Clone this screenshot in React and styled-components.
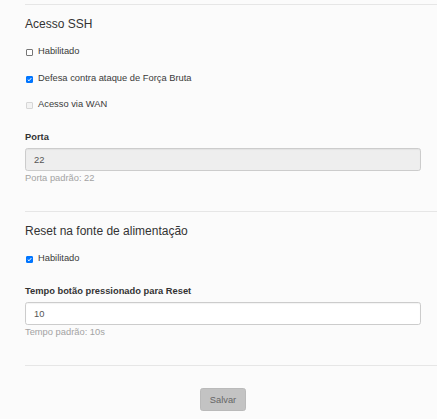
import React from "react";
import styled, { createGlobalStyle } from "styled-components";

const GlobalStyle = createGlobalStyle`
    html, body {
        margin: 0;
        padding: 0;
        background: #fbfbfb;
    }
    body {
        font-family: "Liberation Sans", Arial, sans-serif;
        color: #333;
    }
`;

const Page = styled.div`
    padding-top: 4px;
    padding-left: 25px;
`;

const Divider = styled.hr`
    margin: 0;
    border: none;
    border-top: 1px solid #e6e6e6;
    height: 0;
`;

const Section = styled.section`
    padding-right: 16px;
    padding-bottom: 26px;
`;

const Title = styled.h4`
    margin: 12px 0 0;
    font-size: 12px;
    line-height: 14px;
    font-weight: normal;
    color: #333;
`;

const CheckList = styled.div`
    display: flex;
    flex-direction: column;
    gap: 13.5px;
    margin-top: 14px;
`;

const CheckRow = styled.label`
    display: flex;
    align-items: center;
    height: 13px;
    font-size: 9.33px;
    line-height: 13px;
    color: #3a3a3a;
`;

const Box = styled.span`
    box-sizing: border-box;
    width: 7px;
    height: 7px;
    margin: 2px 5px 0 1px;
    border-radius: 1px;
    display: flex;
    align-items: center;
    justify-content: center;
    border: 1px solid ${(props) => (props.checked ? "#0075ff" : props.disabled ? "#d6d6d6" : "#767676")};
    background: ${(props) => (props.checked ? "#0075ff" : props.disabled ? "#f3f3f3" : "#fff")};
`;

const Label = styled.div`
    margin-top: 20px;
    font-size: 9.33px;
    line-height: 13px;
    font-weight: bold;
    color: #333;
`;

const Input = styled.input`
    display: block;
    box-sizing: border-box;
    width: 100%;
    height: 23px;
    margin-top: 4px;
    padding: 0 8px;
    font-family: inherit;
    font-size: 9.33px;
    color: #555;
    border: 1px solid #cccccc;
    border-radius: 2.67px;
    background: ${(props) => (props.disabled ? "#eeeeee" : "#fff")};
    box-shadow: inset 0 1px 1px rgba(0, 0, 0, 0.05);
    outline: none;
`;

const Help = styled.div`
    margin-top: 1px;
    font-size: 9.33px;
    line-height: 13px;
    color: #a3a3a3;
`;

const Footer = styled.div`
    display: flex;
    justify-content: center;
    padding: 22px 16px 0 0;
`;

const Button = styled.button`
    height: 23px;
    padding: 0 9px;
    font-family: inherit;
    font-size: 9.33px;
    color: #666;
    background: #c3c3c3;
    border: 1px solid #bababa;
    border-radius: 2.67px;
    cursor: not-allowed;
`;

function Check({ checked, disabled, children }) {
    return (
        <CheckRow>
            <Box checked={checked} disabled={disabled}>
                {checked && (
                    <svg width="5" height="5" viewBox="0 0 10 10">
                        <path d="M1.5 5.2 L4 7.6 L8.6 2.2" fill="none" stroke="#fff" strokeWidth="2" />
                    </svg>
                )}
            </Box>
            {children}
        </CheckRow>
    );
}

export default function App() {
    return (
        <>
            <GlobalStyle />
            <Page>
                <Divider />
                <Section>
                    <Title>Acesso SSH</Title>
                    <CheckList>
                        <Check>Habilitado</Check>
                        <Check checked>Defesa contra ataque de Força Bruta</Check>
                        <Check disabled>Acesso via WAN</Check>
                    </CheckList>
                    <Label>Porta</Label>
                    <Input disabled defaultValue="22" />
                    <Help>Porta padrão: 22</Help>
                </Section>
                <Divider />
                <Section>
                    <Title>Reset na fonte de alimentação</Title>
                    <CheckList>
                        <Check checked>Habilitado</Check>
                    </CheckList>
                    <Label>Tempo botão pressionado para Reset</Label>
                    <Input defaultValue="10" />
                    <Help>Tempo padrão: 10s</Help>
                </Section>
                <Divider />
                <Footer>
                    <Button disabled>Salvar</Button>
                </Footer>
            </Page>
        </>
    );
}
